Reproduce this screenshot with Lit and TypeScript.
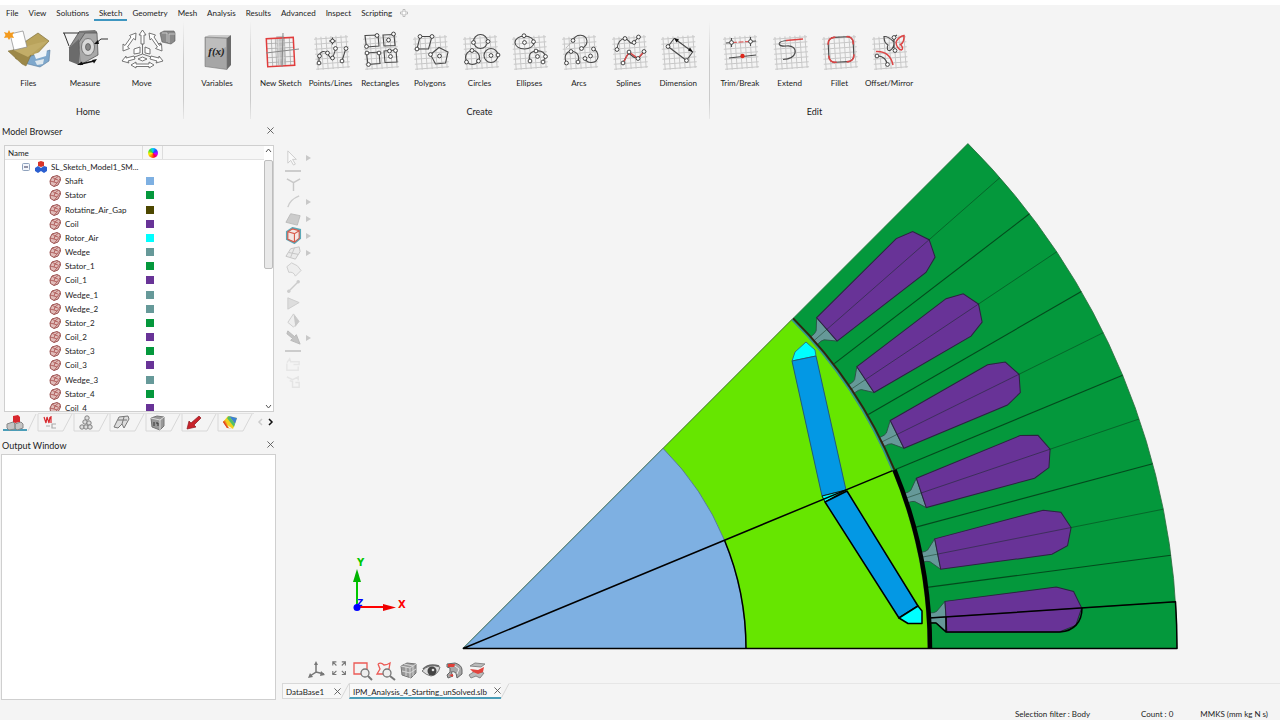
import { LitElement, html, svg, css, TemplateResult } from "lit";
import { customElement, state } from "lit/decorators.js";
import { classMap } from "lit/directives/class-map.js";
import { styleMap } from "lit/directives/style-map.js";

type Art = TemplateResult;

/* ---------- ribbon artwork ---------- */

const steps = [4, 9, 14, 19, 24, 29, 34];
const mesh = svg`<g class="mesh" transform="rotate(-4 21 22)">
  ${steps.map((n) => svg`<path d="M${n + 2} 6V39M4 ${n + 4}H38" />`)}
</g>`;

const dots = (...points: [number, number][]) =>
  points.map(([x, y]) => svg`<circle class="dot" cx=${x} cy=${y} r="1.9" />`);

const art: Record<string, Art> = {
  files: svg`
    <path d="M9 20L34 3L45 11L30 27L12 29Z" fill="#b9a35c" stroke="#80703a" stroke-width=".7" />
    <path d="M24 27L46 20L45 31L36 37L20 33Z" fill="#7fa8cc" stroke="#55789a" stroke-width=".6" />
    <path d="M30 24L43 20L42 26L32 29Z" fill="#eef4f8" /><path d="M31 31L40 29L39 34L33 35Z" fill="#dfe8ee" />
    <path d="M4 21L9 20L27 25L22 36L18 34Z" fill="#9c8848" stroke="#7a6a34" stroke-width=".5" />
    <path d="M9 20L34 13L44 11L24 27Z" fill="#c2ad68" />
    <path d="M6 4L19 1L23 17L10 20Z" fill="#fff" stroke="#888" stroke-width=".7" />
    <path d="M5 0L6.500 3L10 2L8.500 5L10 8L6.500 7.500L5 10L3.500 7.500L0 8L1.500 5L0 2L3.500 3Z" fill="#f39a1e" />`,
  measure: svg`
    <path d="M8 18L18 2L36 2L25 18Z" fill="#8d8d8d" stroke="#555" stroke-width=".8" />
    <path d="M8 18L18 9L18 35L8 31Z" fill="#6b6b6b" />
    <path d="M18 12L24 3L36 3L37 25L19 35Z" fill="#a9a9a9" stroke="#555" stroke-width=".8" />
    <path d="M18 3L36 2L34 0L18 1Z" fill="#777" />
    <ellipse cx="27" cy="17" rx="6.500" ry="8.500" fill="#d8d8d8" stroke="#666" stroke-width=".8" />
    <ellipse cx="27" cy="17" rx="2.500" ry="3.500" fill="#888" stroke="#444" stroke-width=".6" />
    <path d="M2 3H18M3 3L8 16M47 9H40L34 14" fill="none" stroke="#333" />
    <path d="M33 14L37 10L38 14ZM16 35L21 31.500L22 35ZM36 29L31 30L33 33.500Z" fill="#111" />
    <path d="M20 34L33 31" stroke="#111" stroke-width="1.500" />`,
  move: svg`<g fill="#fff" stroke="#666" stroke-width=".9">
    <path d="M28.500 0L32 5H30V14H27V5H25Z" />
    <path d="M9 21V14L11 15.500L17 7L15.500 5.500L22 3L21.500 10L19.500 8.500L13.500 17L15.500 18.500Z" />
    <path d="M48 21L47.500 14L45.500 15.500L40 7L41.500 5L35 3L36 10L37.500 8.500L43.500 17L41.500 18.500Z" />
    <path d="M20 19L26 17V23L20 24ZM31 17L36 19V24L31 23Z" />
    <path d="M28.500 14V24M18 28L28.500 24L40 28" fill="none" />
    <path d="M8 31L12 26V28L20 26L21 29L14 31L15 33ZM49 31L45 26V28L37 26L36 29L43 31L42 33Z" />
    <path d="M24 29L28.500 27L33 29L28.500 31ZM17 35L22 32V34H35V32L40 35L35 38V36.500H22V38Z" /></g>
    <path d="M46 3L50 1H60L61 3V11L57 14L48 12Z" fill="#8a8a8a" stroke="#555" stroke-width=".6" />
    <path d="M48 3H53V12M55 4H61M55 4V13" fill="none" stroke="#ddd" stroke-width=".7" /><path d="M44 14l3-1-1 2" fill="none" stroke="#555" stroke-width=".8" />`,
  variables: svg`
    <path d="M8 7L12 5H34L30 8.500Z" fill="#ccc" /><path d="M30 8L34 5V35L30 39.500Z" fill="#6a6a6a" />
    <path d="M8 7L30 8V39.500L8 36.500Z" fill="#a6a6a6" stroke="#777" stroke-width=".6" />
    <path d="M9 8L29 9L29 17L9 27Z" fill="#bdbdbd" />
    <text x="19.500" y="25" class="fx">f(x)</text>`,
  newSketch: svg`
    <g transform="rotate(-3 20 22)"><rect x="6" y="8" width="27" height="28" fill="#f2f2f2" />
    <path d="M11 8V36M15 8V36M24 8V36M29 8V36M6 13H33M6 18H33M6 27H33M6 32H33" class="thin" />
    <rect x="16" y="6" width="8" height="29" fill="#b4b4b4" opacity=".8" />
    <path d="M18 8V35M22 8V35M16 12H24M16 17H24M16 28H24" stroke="#ddd" stroke-width=".8" />
    <rect x="6" y="8" width="27" height="28" fill="none" stroke="#e13c3c" stroke-width="1.500" /></g>
    <path d="M5 23L38 19M22 3L21 37" stroke="#888" fill="none" />`,
  points: svg`${mesh}<path class="ink" d="M8 33V26Q10 19 16.500 23Q21 34 24.500 19M31 31L35 18" />
    <path class="ink" d="M21.500 7.500V14.500M18 11H25" />
    ${dots([8, 33], [8.5, 26], [16.5, 23], [21.5, 28], [24.5, 18.5], [31, 31], [35, 18.5], [21.5, 11])}`,
  rects: svg`${mesh}<path class="ink" d="M5 5.500L18 5L19 16L6.500 17ZM23 5L34 4.500L35 15.500L24 16ZM6.500 23L19 22L20 33.500L8 34.500ZM24 21L36 20L37 32L25 32.500Z" />
    ${dots([6.5, 16.5], [17, 5.5], [33.5, 4], [28.5, 10], [7, 23], [19, 23], [8.5, 34.5], [30.5, 26.5], [35.5, 20.5], [29.5, 21])}`,
  polygons: svg`${mesh}<path class="ink" d="M10 6.500H22L18.500 19H7ZM20.500 24.500L29 17.500L38 22L35.500 33L25.500 34Z" />
    ${dots([10, 6.5], [22, 6.5], [7, 19], [20.5, 24.5], [29.5, 26])}`,
  circles: svg`${mesh}<g class="ink"><circle cx="20.500" cy="11.500" r="7" /><circle cx="12.500" cy="27.500" r="7" /><circle cx="31" cy="25.500" r="7" /></g>
    ${dots([13.5, 12.5], [28, 11.5], [6.5, 32], [18.5, 31], [12, 20.5], [38, 25], [31, 25.5])}`,
  ellipses: svg`${mesh}<g class="ink"><ellipse cx="15.500" cy="12.500" rx="9.500" ry="6.500" /><path d="M21 31Q18 22 27 21Q35 20 36.500 26.500L34 32" /></g>
    ${dots([15.5, 12.5], [15, 5.7], [24.5, 11.7], [21, 31], [27, 21], [36.5, 26.5], [34, 32], [28.5, 26.5])}`,
  arcs: svg`${mesh}<path class="soft" d="M7 18L14 10.500" /><g class="ink"><path d="M14 10.500C17 3 27 4 28 11C28 15 26 17 22.500 18.500" /><path d="M7.500 33C4 26 8 21 12 21.500C19 21 21 27 19 32" /><path d="M26 28.500C28 34 38 34 39 27C39 22 37 20 34.500 19" /></g>
    ${dots([14, 10.5], [22.5, 18.5], [7.5, 33], [12, 21.5], [19, 32], [26, 28.5], [34.5, 19], [31.5, 26])}`,
  splines: svg`${mesh}<path class="ink" d="M8 19Q9 9 16 8.500C20 9 21 16 25 12L29.500 7" /><path class="ink" d="M14 33C17 28 18 23 21 24C25 28 29 31 35 21.500" /><path class="red" d="M14 33L20 22L29 28.500L35 21.500" stroke-width="1.400" />
    ${dots([8, 19.5], [16, 8.5], [25, 12.5], [29.5, 7], [14, 33], [20, 22], [29, 28.5], [35, 21.5])}`,
  dimension: svg`${mesh}<path class="ink" d="M10 16.500L28.500 30.500M10 16.500L16.500 8M28.500 30.500L35 21.500M17 9L34 21.500" />
    <path d="M16 8L21 9.500L18.500 12.500ZM35 22L30 20.500L32 17.500Z" fill="#111" />${dots([10, 16.5], [28.5, 30.5])}`,
  trim: svg`${mesh}<path class="ink" d="M6 13L12 12.500M30 11.500L36 11M11.500 8V17M30.500 7V16M9 28L36 25" /><path class="red" d="M12 12.500L30 11.500" stroke-dasharray="5 1.500" />
    ${dots([11.5, 12.5], [30.5, 11.5])}<circle cx="22.500" cy="26" r="2.200" fill="#e0271c" />`,
  extend: svg`${mesh}<path class="ink" d="M18 10.500C6 11 7 17 16 16C23 15 26 19 25 23C24 27 20 29 13 29.500" /><path class="red" d="M16 10.500L33 9" stroke-width="1.500" />`,
  fillet: svg`${mesh}<g transform="rotate(-3 22 19)"><rect class="ink" x="9.500" y="7" width="25" height="25" rx="6" />
    <path class="red" stroke-width="1.600" d="M9.500 14V13A6 6 0 0 1 15.500 7H17M28 7H29A6 6 0 0 1 34.500 13V15M34.500 25V26A6 6 0 0 1 28.500 32H27M17 32H15.500A6 6 0 0 1 9.500 26V25" /></g>`,
  offset: svg`${mesh}<path class="ink" d="M25 12C21 8 18 6 15 6.500C15 12 17 14 19 15C17 19 19 21 21 20.500C24 19 25 15 25 12ZM25 9V18M25 7L28 5" />
    <path class="red" stroke-width="1.500" d="M27 12C29 8 32 6 35 5.500C35.500 11 34 13 31.500 14.500C34 17 34 19 32.500 20C30 20 27 16 27 12M7 21.500C16 21 22 26 24 35" /><path class="ink" d="M8 26Q17 26 18.500 35" />
    ${dots([25, 7.5], [26, 20.5], [8, 26], [18.5, 34.5])}`,
};

const ribbon = [
  { name: "Home", kind: "home", tools: [["Files", "files", 48], ["Measure", "measure", 48], ["Move", "move", 56]] },
  { name: "", kind: "vars", tools: [["Variables", "variables", 40]] },
  {
    name: "Create", kind: "create", tools: [["New Sketch", "newSketch", 40], ["Points/Lines", "points", 40], ["Rectangles", "rects", 40],
      ["Polygons", "polygons", 40], ["Circles", "circles", 40], ["Ellipses", "ellipses", 40], ["Arcs", "arcs", 40], ["Splines", "splines", 40], ["Dimension", "dimension", 40]],
  },
  { name: "Edit", kind: "edit", tools: [["Trim/Break", "trim", 40], ["Extend", "extend", 40], ["Fillet", "fillet", 40], ["Offset/Mirror", "offset", 40]] },
] as { name: string; kind: string; tools: [string, string, number][] }[];

/* ---------- model data ---------- */

const palette: Record<string, string> = {
  Shaft: "#7eb0e2", Stator: "#04983c", Rotating: "#4d4700", Coil: "#683397", Rotor: "#00ffff", Wedge: "#669999",
};
const parts = ["Shaft", "Stator", "Rotating_Air_Gap", "Coil", "Rotor_Air", "Wedge", "Stator_1", "Coil_1", "Wedge_1",
  "Wedge_2", "Stator_2", "Coil_2", "Stator_3", "Coil_3", "Wedge_3", "Stator_4", "Coil_4"];

const solidIcon = html`<svg class="solid" viewBox="0 0 12 12" aria-hidden="true">
  <path d="M1 6L3 2L8 0.500L11 2L11.500 5L9 10L5 11.500L1.500 9.500Z" fill="#e0bcb9" stroke="#9a5250" />
  <path d="M3 2L6 4L9 1.500M6 4L5 7L1 6M5 7L8 8L11 4M8 8L5 11.500M6 4L9 5" fill="none" stroke="#a9504e" stroke-width=".8" /></svg>`;

/* ---------- machine cross-section ---------- */

const cx = 463;
const cy = 648.5;
const at = (r: number, deg: number) => {
  const a = (deg * Math.PI) / 180;
  return `${(cx + r * Math.cos(a)).toFixed(1)} ${(cy - r * Math.sin(a)).toFixed(1)}`;
};
const arc = (r: number, from: number, to: number) => `M${at(r, from)}A${r} ${r} 0 0 0 ${at(r, to)}`;
const sector = (r: number) => `M${cx} ${cy}L${at(r, 0)}A${r} ${r} 0 0 0 ${at(r, 45)}Z`;
const slots = [0, 1, 2, 3, 4, 5];

const machine = svg`
  <path d=${sector(714)} fill="#04983c" stroke="#2c6b3e" stroke-width=".8" />
  ${slots.map((n) => svg`
    <g transform=${`translate(${cx} ${cy}) rotate(${-(3.75 + 7.5 * n)})`}>
      <path d="M466 -5H472L475 -6L484 -15.500V15.500L475 6L472 5H466Z" fill="#669999" stroke="#2b4f45" stroke-width=".8" />
      <path d="M484 -15.500L596 -22.500L613 -17L620 0L613 17L596 22.500L484 15.500Z" fill="#683397" stroke="#2c2340" />
      <path d="M466 0H714" stroke="#0a2a14" stroke-width=".9" opacity=".45" />
    </g>
    ${n ? svg`<path d=${`M${at(468, 7.5 * n)}L${at(714, 7.5 * n)}`} stroke="#043d18" stroke-width="1.100" opacity=".85" />` : ""}`)}
  <path d=${sector(465)} fill="#66e600" stroke="#5a7a30" stroke-width=".7" />
  <path d=${arc(465, 22.5, 45)} fill="none" stroke="#3c8f92" stroke-width="1.500" />
  <path d=${arc(467, 22.5, 45)} fill="none" stroke="#33200e" stroke-width="1.800" />
  <path d=${sector(283)} fill="#7eb0e2" stroke="#4f6f90" stroke-width=".8" />
  <path d="M792 361L795 352L806 342L815 350L816 356Z" fill="#0ff" stroke="#287c88" />
  <path d="M792 361L816 356L846 490L822 496Z" fill="#0398e4" stroke="#235a78" />
  <path d="M822 496L846 490L825 502Z" fill="#0ff" stroke="#111" />
  <g stroke="#000" stroke-width="1.500" stroke-linejoin="round">
    <path d="M825 502L847 491L918 606L899 618Z" fill="#0398e4" />
    <path d="M918 606L922 611L922 623.500H908L899 618Z" fill="#0ff" />
    <path d=${`M${cx} ${cy}L${at(714, 0)}A714 714 0 0 0 ${at(714, 3.75)}L${at(467, 3.75)}M${cx} ${cy}L${at(465, 22.5)}`} fill="none" />
    <path d=${arc(283, 0, 22.5)} fill="none" />
    <path d="M930 623H936L946 632H1060C1074 631 1082 622 1082 608M946 617V632" fill="none" />
  </g>
  <path d=${arc(467, 0, 22.5)} fill="none" stroke="#000" stroke-width="4.500" />
  <g class="axes">
    <path d="M357 607V580" stroke="#00c800" stroke-width="2" /><path d="M357 569L361 582H353Z" fill="#00b400" />
    <path d="M357 607H384" stroke="#f00" stroke-width="2" /><path d="M396 607.500L383 604V611Z" fill="#e00" />
    <text x="357" y="566" fill="#00c800">Y</text><text x="398" y="608" fill="#f00">X</text><text x="357" y="606" class="z" fill="#00f">Z</text>
    <circle cx="357" cy="607.500" r="3.500" fill="#00f" />
  </g>`;

/* ---------- side and bottom tool strips ---------- */

const strip: { label: string; menu?: boolean; line?: boolean; art: Art }[] = [
  { label: "Select", menu: true, line: true, art: svg`<path d="M3 2V15L6 12L9 17L11 16L8 11H12Z" fill="#fafafa" stroke="#ccc" />` },
  { label: "Vertex", art: svg`<path d="M2 3L9 7L16 3M9 7V16" fill="none" stroke="#c8c8c8" stroke-width="1.500" />` },
  { label: "Curve", menu: true, art: svg`<path d="M3 15Q5 7 15 3" fill="none" stroke="#ccc" stroke-width="1.500" />` },
  { label: "Face", menu: true, art: svg`<path d="M1 13L6 4L16 6L13 16Z" fill="#ccc" stroke="#bbb" />` },
  { label: "Body", menu: true, art: svg`<path d="M2 5L8 1L16 3V12L10 17L2 13Z" fill="#f3e6e3" stroke="#5aa8b8" stroke-width="2" /><path d="M3 5L10 7L15 4M10 7V16M3 5V13L10 16L15 12V4L8 2Z" fill="none" stroke="#d95a4a" stroke-width="1.200" />` },
  { label: "Component", menu: true, art: svg`<path d="M1 13L6 5L15 3L16 8L11 16ZM4 9L14 11M10 4L6 14" fill="#eaeaea" stroke="#c4c4c4" />` },
  { label: "Surface", art: svg`<path d="M2 6L7 2Q14 4 17 10L11 16Q9 11 4 12Z" fill="#eee" stroke="#ccc" />` },
  { label: "Edge", art: svg`<path d="M4 14L14 4" stroke="#ccc" stroke-width="1.500" /><circle cx="4" cy="14" r="1.800" fill="#ccc" /><circle cx="14" cy="4" r="1.800" fill="#ccc" />` },
  { label: "Element face", art: svg`<path d="M3 3L15 8L3 15Z" fill="#ddd" stroke="#ccc" />` },
  { label: "Element", art: svg`<path d="M9 2L15 10L9 16L3 11Z" fill="#eee" stroke="#ccc" /><path d="M9 2L11 16L15 10Z" fill="#c8c8c8" />` },
  { label: "Direction", menu: true, line: true, art: svg`<path d="M3 2L10 8L12 6L16 16L6 12L8 10L2 5Z" fill="#c4c4c4" stroke="#b8b8b8" />` },
  { label: "Undo", art: svg`<path d="M2 7L5 3L6 6H15V9H9M2 8V15H14V11" fill="none" stroke="#e6e6e6" stroke-width="1.500" />` },
  { label: "Redo", art: svg`<path d="M2 4L8 7L14 4V8M5 8L8 9V15H15V10H11" fill="none" stroke="#e4e4e4" stroke-width="1.500" />` },
];

const viewTools: [string, Art][] = [
  ["Axes", svg`<path d="M8 3V11L2 15M8 11L16 13" fill="none" stroke="#777" stroke-width="1.500" /><path d="M8 0L10 4H6ZM0 17L2 12L5 16ZM17 14L13 10L12 15Z" fill="#777" />`],
  ["Fit all", svg`<path d="M2 6V2H6M2 2L6 6M12 2H16V6M16 2L12 6M2 12V16H6M2 16L6 12M12 16H16V12M16 16L12 12" transform="scale(.9) translate(0 -1)" fill="none" stroke="#777" stroke-width="1.200" />`],
  ["Zoom box", svg`<path d="M0 2H13V13H0Z" fill="none" stroke="#ec5a55" stroke-width="1.300" /><circle cx="11" cy="12" r="4" fill="#eee" stroke="#777" stroke-width="1.300" /><path d="M14 15L18 19" stroke="#777" stroke-width="2" />`],
  ["Zoom region", svg`<path d="M1 3Q4 1 7 4Q10 4 13 2L12 8M1 3L3 8L0 13H8" fill="none" stroke="#ec5a55" stroke-width="1.300" /><circle cx="10" cy="12" r="4" fill="#eee" stroke="#777" stroke-width="1.300" /><path d="M13 15L18 19" stroke="#777" stroke-width="2" />`],
  ["Display", svg`<path d="M1 5L7 2L16 3V12L11 17L2 14Z" fill="#999" stroke="#777" /><path d="M1 5L10 7L16 3M10 7V17M4 3L13 5V15M6 6V15M2 10L10 12L16 8" fill="none" stroke="#ddd" stroke-width=".9" />`],
  ["Show", svg`<path d="M-1 10Q6 2 17 6Q15 14 8 15Q3 14 -1 10Z" fill="#ddd" stroke="#777" /><circle cx="9" cy="10" r="4.500" fill="#444" /><circle cx="10" cy="9" r="1.300" fill="#ddd" /><path d="M0 8Q6 2 16 5" fill="none" stroke="#666" stroke-width="1.500" />`],
  ["Clip", svg`<path d="M1 3L9 2Q16 4 16 9V13L11 17L10 12Q8 10 5 11L7 15L2 17L1 14L4 11V7L1 6Z" fill="#a8a8a8" stroke="#666" /><path d="M2 3H9L8 6H2Z" fill="#e13f38" /><path d="M3 14L7 13L7 16Z" fill="#e13f38" /><path d="M9 5L13 8L11 13" fill="none" stroke="#eee" />`],
  ["Section", svg`<path d="M1 5L6 2L16 3L12 6Z" fill="#bbb" stroke="#888" /><path d="M0 14L6 10L15 12L11 17L7 15L2 17Z" fill="#bbb" stroke="#888" /><path d="M1 8L9 9L15 6L14 11L9 13L4 11Z" fill="#e2453e" />`],
];

const browserTabs: [string, Art][] = [
  ["Solids", svg`<path d="M7 2L12 1L14 3V8L9 9L7 8Z" fill="#d8282e" /><path d="M1 10L7 8L9 10V15L3 16L1 14ZM9 10L15 8L17 10V14L11 16L9 14Z" fill="#c4c4c4" stroke="#888" />`],
  ["Curves", svg`<path d="M3 3L5 9L6 3L8 9L9 3M10 2V9" fill="none" stroke="#d8282e" stroke-width="1.200" /><path d="M5 12H9M15 10H11V14H15" fill="none" stroke="#aaa" stroke-width="1.200" />`],
  ["Nodes", svg`<g fill="#ddd" stroke="#777" stroke-width=".9"><circle cx="10" cy="4" r="2.200" /><circle cx="8" cy="8" r="2.200" /><circle cx="12" cy="9" r="2.200" /><circle cx="5" cy="13" r="2.200" /><circle cx="9" cy="13" r="2.200" /><circle cx="13" cy="13" r="2.200" /></g>`],
  ["Faces", svg`<path d="M1 13L6 3L15 2L16 5L11 14L9 10L5 14ZM5 6H14M11 3L9 10" fill="#ddd" stroke="#777" />`],
  ["Properties", svg`<path d="M2 4L8 2L15 3V12L11 16L3 13Z" fill="#999" stroke="#777" /><path d="M2 4L11 6V16M11 6L15 3" fill="none" stroke="#ddd" /><path d="M5 8V12M7 9H9V12" stroke="#333" fill="none" />`],
  ["Loads", svg`<path d="M2 15L4 7L6 9L14 2L16 4L9 11L11 13Z" fill="#c9232b" stroke="#8d1a20" stroke-width=".7" />`],
  ["Results", svg`<path d="M2 8L7 2L16 4L12 15Z" fill="#f0d21c" /><path d="M2 8L4 6L8 14L12 15L6 14Z" fill="#f08a20" /><path d="M2 8L3 7L7 14L6 14Z" fill="#e03c22" /><path d="M8 2L16 4L14 10Z" fill="#3b82d4" /><path d="M6 4L8 2L14 10L13 13Z" fill="#4fc06a" />`],
];

const cross = html`<svg class="cross" viewBox="0 0 8 8" aria-hidden="true"><path d="M.5 .5L7.500 7.500M7.500 .5L.5 7.500" /></svg>`;

@customElement("app-root")
export class AppRoot extends LitElement {
  @state() private menu = "Sketch";

  static styles = css`
    :host { display: flex; flex-direction: column; box-sizing: border-box; height: 100vh; padding-top: 5px; overflow: hidden;
      background: #fff; color: #1c1c1c; font: 8px/12px Lato, "Liberation Sans", sans-serif; }
    * { box-sizing: border-box; }
    button { font: inherit; color: inherit; background: none; border: 0; padding: 0; margin: 0; cursor: default; }
    h2 { font-size: 9px; line-height: 17px; padding-top: 1px; font-weight: 400; margin: 0; }
    .menu { display: flex; height: 16px; background: #f4f4f4; padding-left: 1px; }
    .menu button { padding: 2px 5px 0; height: 16px; border-bottom: 2px solid transparent; line-height: 12px; }
    .menu button.on { border-color: #3e96c0; }
    .plus { width: 8px; height: 8px; margin: 4px 3px; fill: #fff; stroke: #bbb; }

    .ribbon { display: flex; background: #f4f4f4; height: 101px; }
    .group { display: flex; flex-direction: column; padding-top: 9px; }
    .tools { display: flex; }
    .tool { flex: 1 1 0; min-width: 0; display: flex; flex-direction: column; align-items: center; white-space: nowrap; }
    .tool svg { height: 40px; overflow: visible; margin-bottom: 7px; }
    .title { font-size: 9px; text-align: center; margin-top: 17px; }
    .home { width: 176px; margin-right: 7px; }
    .home .tools { padding-right: 6px; }
    .vars { width: 66px; }
    .create { width: 458px; padding-left: 5px; padding-right: 6px; }
    .edit { width: 210px; padding-left: 5px; padding-right: 6px; }
    .rule { width: 1px; height: 98px; background: linear-gradient(#f4f4f4, #cacaca 40%, #cacaca 80%, #e8e8e8); }
    .mesh { stroke: #c8c8c8; stroke-width: 1; fill: none; }
    .ink { fill: none; stroke: #484848; stroke-width: 1.1; }
    .soft, .thin { fill: none; stroke: #aaa; stroke-width: 0.8; }
    .red { fill: none; stroke: #dc4444; }
    .dot { fill: #fff; stroke: #333; stroke-width: 0.9; }
    .fx { font: italic bold 11px "Liberation Serif", serif; text-anchor: middle; fill: #222; }

    .work { flex: 1; min-height: 0; display: grid; grid-template-columns: 277px 1fr; background: #f4f4f4; }
    .side { display: flex; flex-direction: column; min-height: 0; padding-bottom: 6px; }
    .head { display: flex; justify-content: space-between; align-items: center; padding: 0 3px 0 2px; }
    .head .cross { margin-bottom: 2px; }
    .cross { width: 7px; height: 7px; stroke: #555; stroke-width: 1; fill: none; display: block; }
    .tree { display: flex; height: 267px; margin: 5px 3px 0 4px; border: 1px solid #cfcfcf; background: #fff; overflow: hidden; }
    table { display: block; flex: 1; min-width: 0; }
    thead, tbody { display: grid; grid-auto-rows: 1fr; }
    thead { height: 14px; background: #f7f7f7; border-bottom: 1px solid #e2e2e2; }
    tbody { height: 255px; }
    tr { display: grid; grid-template-columns: 138px 20px 1fr; align-items: stretch; }
    th, td { padding: 0; text-align: left; font-weight: 400; display: flex; align-items: center; min-width: 0; }
    th { border-right: 1px solid #ddd; padding-left: 3px; }
    th.tint { padding: 0; justify-content: center; }
    th:last-child { border: 0; }
    .wheel { width: 10px; height: 10px; border-radius: 50%; background: conic-gradient(#0cf, #24f, #c0f, #f03, #f80, #fe0, #3d3, #0cf); }
    .part { padding-left: 44px; gap: 4px; }
    .root { padding-left: 17px; gap: 4px; }
    .root span { white-space: nowrap; }
    .solid { width: 12px; height: 12px; flex: none; }
    .fold { width: 8px; height: 8px; fill: #f3f6fb; stroke: #8fa2bd; margin-right: 1px; }
    .chip { width: 8px; height: 8px; margin-left: 3px; }
    .bar { width: 9px; display: flex; flex-direction: column; align-items: center; justify-content: space-between; padding: 1px 0; }
    .bar svg { width: 7px; height: 7px; fill: none; stroke: #555; }
    .thumb { width: 9px; height: 109px; margin-top: 6px; background: #e9e9e9; border: 1px solid #bdbdbd; border-radius: 2px; }
    .spring { flex: 1; }
    .tabs { display: flex; align-items: center; height: 19px; padding-left: 3px; margin-bottom: 5px; }
    .tabs button { width: 36px; flex: none; height: 18px; border-top: 1px solid #e0e0e0; }
    .tabs button svg { display: block; width: 36px; height: 17px; overflow: visible; }
    .tabs .on { border-bottom: 2px solid #4a9db8; border-top-color: #f4f4f4; width: 24px; margin-right: 11px; }
    .tabs .arrow { width: 8px; height: 10px; border: 0; margin-left: 2px; }
    .tabs .arrow svg { width: 8px; height: 10px; fill: none; stroke: #111; stroke-width: 1.5; }
    .tabs .arrow:disabled svg { stroke: #ccc; }
    .tabs .first { margin-left: 3px; }
    .slant { fill: none; stroke: #d8d8d8; }
    .output { flex: 1; margin: 0 1px 0 1px; background: #fff; border: 1px solid #cfcfcf; display: block; resize: none; padding: 2px; font: inherit; min-height: 0; }

    .view { display: flex; flex-direction: column; min-width: 0; min-height: 0; }
    .stage { flex: 1; min-height: 0; display: grid; grid-template: minmax(0, 1fr) / minmax(0, 1fr); }
    .stage > * { grid-area: 1 / 1; }
    .drawing { width: 100%; height: 100%; display: block; }
    .axes text { font: bold 10px "DejaVu Sans", sans-serif; }
    .axes .z { font-size: 8px; font-style: italic; }
    .strip { align-self: start; justify-self: start; padding: 27px 0 0 8px; display: flex; flex-direction: column; }
    .strip button { display: flex; align-items: center; height: 17px; width: 28px; gap: 4px; }
    .strip button svg { width: 17px; height: 17px; flex: none; }
    .strip button .caret { width: 5px; height: 6px; fill: #c8c8c8; }
    .strip hr { width: 16px; height: 2px; border: 0; background: #ccc; margin: 4px 0; }
    .nav { align-self: end; justify-self: start; display: flex; gap: 5px; padding: 0 0 4px 31px; }
    .nav svg { display: block; width: 18px; height: 18px; overflow: visible; }
    .docs { display: flex; height: 23px; padding-left: 5px; }
    .doc { height: 16px; display: flex; align-items: center; border-top: 1px solid #ddd; }
    .doc a { color: inherit; text-decoration: none; line-height: 12px; padding-top: 2px; }
    .idle { width: 59px; border: 1px solid #d8d8d8; border-right: 0; padding-left: 3px; justify-content: space-between; background: #f8f8f8; }
    .live { width: 152px; border-left: 1px solid #d8d8d8; border-bottom: 2px solid #4a9db8; padding-left: 3px; justify-content: space-between; background: #f9f9f9; }
    .edge { width: 8px; height: 16px; fill: none; stroke: #d8d8d8; }
    .rest { flex: 1; height: 1px; background: #e6e6e6; }
    .status { display: flex; justify-content: flex-end; height: 14px; background: #f4f4f4; padding: 2px 12px 0 0; }
    .status span { margin-right: 51px; }
    .status span:nth-child(2) { margin-right: 27px; }
    .status span:last-child { margin-right: 0; }
  `;

  private renderRibbon() {
    return ribbon.map((g, i) => html`
      ${i ? html`<div class="rule"></div>` : ""}
      <section class="group ${g.kind}" aria-label=${g.name || "Variables"}>
        <div class="tools">
          ${g.tools.map(([label, key, w]) => html`<button class="tool">
            <svg width=${w} viewBox="0 0 ${w} 40" aria-hidden="true">${art[key]}</svg><span>${label}</span></button>`)}
        </div>
        ${g.name ? html`<div class="title">${g.name}</div>` : ""}
      </section>`);
  }

  private renderTree() {
    return html`<div class="tree">
      <table>
        <thead><tr><th>Name</th><th class="tint" aria-label="Colour"><div class="wheel"></div></th><th></th></tr></thead>
        <tbody>
          <tr><td class="root">
            <svg class="fold" viewBox="0 0 8 8"><rect x=".5" y=".5" width="7" height="7" rx="1" /><path d="M2 4H6" stroke="#335" /></svg>
            <svg class="solid" viewBox="0 0 12 12"><path d="M3 1L6 0L9 1V5L6 6L3 5Z" fill="#d9362c" /><path d="M0 7L3 5L6 7V10L3 12L0 10ZM6 7L9 5L12 6V10L9 12L6 10Z" fill="#2a5fd0" /></svg>
            <span>SL_Sketch_Model1_SM...</span></td><td></td><td></td></tr>
          ${parts.map((p) => html`<tr><td class="part">${solidIcon}${p}</td>
            <td><div class="chip" style=${styleMap({ background: palette[p.split("_")[0]] })}></div></td><td></td></tr>`)}
        </tbody>
      </table>
      <div class="bar"><svg viewBox="0 0 7 7"><path d="M1 5L3.500 2L6 5" /></svg><div class="thumb"></div><div class="spring"></div>
        <svg viewBox="0 0 7 7"><path d="M1 2L3.500 5L6 2" /></svg></div>
    </div>`;
  }

  render() {
    const menus = ["File", "View", "Solutions", "Sketch", "Geometry", "Mesh", "Analysis", "Results", "Advanced", "Inspect", "Scripting"];
    return html`
      <nav class="menu">
        ${menus.map((m) => html`<button class=${classMap({ on: m === this.menu })} @click=${() => (this.menu = m)}>${m}</button>`)}
        <svg class="plus" viewBox="0 0 8 8"><path d="M3 .5H5V3H7.500V5H5V7.500H3V5H.5V3H3Z" /></svg>
      </nav>
      <div class="ribbon">${this.renderRibbon()}</div>
      <div class="work">
        <aside class="side">
          <div class="head"><h2>Model Browser</h2><button aria-label="Close model browser">${cross}</button></div>
          ${this.renderTree()}
          <div class="tabs">
            ${browserTabs.map(([label, a], i) => html`<button class=${classMap({ on: i === 0 })} aria-label=${label}>
              <svg viewBox="0 0 36 17" preserveAspectRatio="xMinYMin">${i ? svg`<path class="slant" d="M0 0V17H25L34 0" />` : svg`<path class="slant" d="M25 17L33 0" />`}
              <g transform="translate(3 0)">${a}</g></svg></button>`)}
            <button class="arrow first" disabled aria-label="Previous tabs"><svg viewBox="0 0 8 10"><path d="M5 2L2 5L5 8" /></svg></button>
            <button class="arrow" aria-label="Next tabs"><svg viewBox="0 0 8 10"><path d="M2 2L5 5L2 8" /></svg></button>
          </div>
          <div class="head"><h2 id="out">Output Window</h2><button aria-label="Close output window">${cross}</button></div>
          <textarea class="output" aria-labelledby="out" readonly></textarea>
        </aside>
        <main class="view">
          <div class="stage">
            <svg class="drawing" viewBox="277 122 1003 561" preserveAspectRatio="xMidYMid meet" role="img" aria-label="Motor cross-section">${machine}</svg>
            <div class="strip">
              ${strip.map((s) => html`<button aria-label=${s.label}><svg viewBox="0 0 18 18">${s.art}</svg>
                ${s.menu ? html`<svg class="caret" viewBox="0 0 5 6"><path d="M0 0L5 3L0 6Z" /></svg>` : ""}</button>${s.line ? html`<hr />` : ""}`)}
            </div>
            <div class="nav">${viewTools.map(([label, a]) => html`<button aria-label=${label}><svg viewBox="0 0 18 18">${a}</svg></button>`)}</div>
          </div>
          <div class="docs">
            <div class="doc idle"><a href="#database">DataBase1</a><button aria-label="Close DataBase1">${cross}</button></div>
            <svg class="edge" viewBox="0 0 8 16"><path d="M0 15.500L8 .5" /></svg>
            <div class="doc live"><a href="#ipm">IPM_Analysis_4_Starting_unSolved.slb</a><button aria-label="Close document">${cross}</button></div>
            <svg class="edge" viewBox="0 0 8 16"><path d="M0 15.500L8 .5" /></svg>
            <div class="rest"></div>
          </div>
        </main>
      </div>
      <footer class="status"><span>Selection filter : Body</span><span>Count : 0</span><span>MMKS (mm kg N s)</span></footer>
    `;
  }
}
